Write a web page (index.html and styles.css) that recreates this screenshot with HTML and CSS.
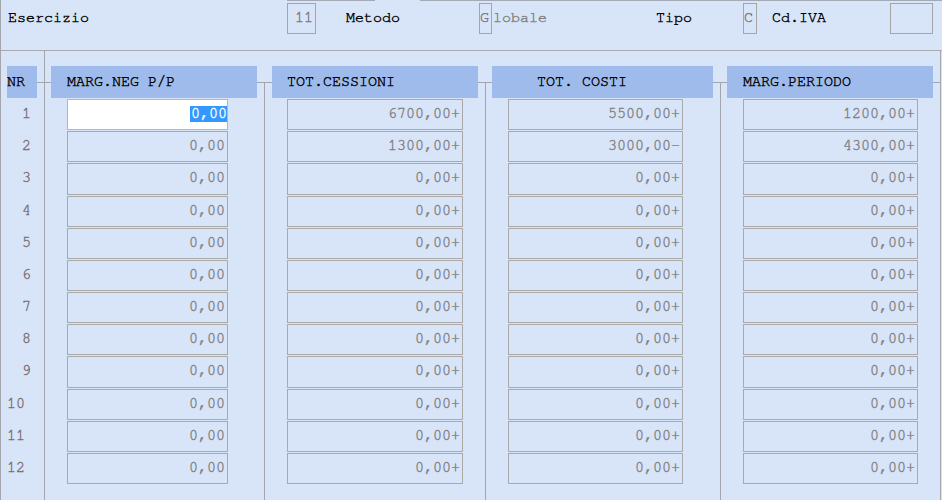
FILE: index.html
```html
<!DOCTYPE html>
<html lang="it">
<head>
<meta charset="utf-8">
<title>Margini</title>
<link rel="stylesheet" href="styles.css">
</head>
<body>
<div class="page">
  <div class="strip"><span class="g1"></span><span class="l1"></span><span class="g2"></span><span class="l2"></span></div>
  <div class="topbar">
    <span class="lbl w-eser">Esercizio</span>
    <span class="box b11">11</span>
    <span class="lbl w-met">Metodo</span>
    <span class="box bg">G</span>
    <span class="lbl dim w-glob">lobale</span>
    <span class="lbl w-tipo">Tipo</span>
    <span class="box bc">C</span>
    <span class="lbl w-iva">Cd.IVA</span>
    <span class="box biva"></span>
  </div>
  <div class="lower">
    <div class="col nr">
      <div class="hd">NR</div>
      <div class="rows">
        <div class="n">1</div><div class="n">2</div><div class="n">3</div><div class="n">4</div>
        <div class="n">5</div><div class="n">6</div><div class="n">7</div><div class="n">8</div>
        <div class="n">9</div><div class="n d2">10</div><div class="n d2">11</div><div class="n d2">12</div>
      </div>
    </div>
    <div class="col c1">
      <div class="hd">MARG.NEG P/P</div>
      <div class="rows">
        <div class="cell sel"><span>0,00</span></div>
        <div class="cell">0,00</div><div class="cell">0,00</div><div class="cell">0,00</div>
        <div class="cell">0,00</div><div class="cell">0,00</div><div class="cell">0,00</div>
        <div class="cell">0,00</div><div class="cell">0,00</div><div class="cell">0,00</div>
        <div class="cell">0,00</div><div class="cell">0,00</div>
      </div>
    </div>
    <div class="col c2">
      <div class="hd">TOT.CESSIONI</div>
      <div class="rows">
        <div class="cell">6700,00+</div><div class="cell">1300,00+</div>
        <div class="cell">0,00+</div><div class="cell">0,00+</div><div class="cell">0,00+</div>
        <div class="cell">0,00+</div><div class="cell">0,00+</div><div class="cell">0,00+</div>
        <div class="cell">0,00+</div><div class="cell">0,00+</div><div class="cell">0,00+</div>
        <div class="cell">0,00+</div>
      </div>
    </div>
    <div class="col c3">
      <div class="hd">TOT. COSTI</div>
      <div class="rows">
        <div class="cell">5500,00+</div><div class="cell">3000,00-</div>
        <div class="cell">0,00+</div><div class="cell">0,00+</div><div class="cell">0,00+</div>
        <div class="cell">0,00+</div><div class="cell">0,00+</div><div class="cell">0,00+</div>
        <div class="cell">0,00+</div><div class="cell">0,00+</div><div class="cell">0,00+</div>
        <div class="cell">0,00+</div>
      </div>
    </div>
    <div class="col c4">
      <div class="hd">MARG.PERIODO</div>
      <div class="rows">
        <div class="cell">1200,00+</div><div class="cell">4300,00+</div>
        <div class="cell">0,00+</div><div class="cell">0,00+</div><div class="cell">0,00+</div>
        <div class="cell">0,00+</div><div class="cell">0,00+</div><div class="cell">0,00+</div>
        <div class="cell">0,00+</div><div class="cell">0,00+</div><div class="cell">0,00+</div>
        <div class="cell">0,00+</div>
      </div>
    </div>
  </div>
</div>
</body>
</html>
```
FILE: styles.css
```css
* { box-sizing: border-box; margin: 0; padding: 0; }
html, body { width: 942px; height: 500px; overflow: hidden; }
body {
  background: #d8e4f8;
  font-family: "Nimbus Mono PS", "Nimbus Mono L", "FreeMono", "Liberation Mono", "Courier New", monospace;
  font-size: 15px;
  color: #000;
  -webkit-text-stroke: 0.4px currentColor;
}
.page {
  height: 500px;
  border-left: 1px solid #a3a7ad;
  display: flex;
  flex-direction: column;
}
.strip { display: flex; height: 1px; flex: none; }
.strip .g1 { width: 286px; }
.strip .l1 { width: 88px; background: #a3a9b5; }
.strip .g2 { width: 45px; }
.strip .l2 { flex: 1; background: #a3a9b5; }

.topbar {
  flex: none;
  display: flex;
  align-items: flex-start;
  height: 50px;
  padding: 2px 0 0 7px;
  border-bottom: 1px solid #a8aaae;
}
.lbl { height: 31px; line-height: 30px; white-space: pre; flex: none; }
.dim { color: #808080; }
.box {
  flex: none;
  height: 31px;
  border: 1px solid #a6a6a6;
  line-height: 28px;
  color: #7a7a7a;
  overflow: hidden;
  white-space: pre;
}
.w-eser { width: 279px; }
.b11 { width: 29px; text-align: right; padding-right: 2px; }
.w-met { width: 133px; margin-left: 30px; }
.bg { width: 13px; }
.w-glob { width: 163px; margin-left: 1px; }
.w-tipo { width: 87px; }
.bc { width: 14px; }
.w-iva { width: 118px; margin-left: 15px; }
.biva { width: 43px; }

.lower { flex: 1; display: flex; }
.col { display: flex; flex-direction: column; flex: none; }
.nr {
  width: 43px;
  background: linear-gradient(#a3a7ad, #a3a7ad) 36px 31px / 100% 1px no-repeat;
}
.c1 {
  width: 220px;
  background:
    linear-gradient(#a3a7ad, #a3a7ad) 0 0 / 1px 100% no-repeat,
    linear-gradient(#a3a7ad, #a3a7ad) 0 31px / 100% 1px no-repeat;
}
.c2 { width: 221px; }
.c3 { width: 235px; }
.c2, .c3 {
  background:
    linear-gradient(#a3a7ad, #a3a7ad) 0 31px / 1px 100% no-repeat,
    linear-gradient(#a3a7ad, #a3a7ad) 0 31px / 100% 1px no-repeat;
}
.c4 {
  width: 221px;
  background:
    linear-gradient(#a3a7ad, #a3a7ad) 0 31px / 1px 100% no-repeat,
    linear-gradient(#a3a7ad, #a3a7ad) 0 31px / 100% 1px no-repeat,
    linear-gradient(#a3a7ad, #a3a7ad) right 0 top 0 / 1px 100% no-repeat;
}

.hd {
  flex: none;
  height: 32px;
  line-height: 31px;
  margin-top: 15px;
  background: #9ebbeb;
  white-space: pre;
}
.nr .hd { width: 30px; margin-left: 6px; }
.c1 .hd { width: 206px; margin-left: 7px; padding-left: 16px; }
.c2 .hd { width: 206px; margin-left: 8px; padding-left: 15px; }
.c3 .hd { width: 221px; margin-left: 7px; padding-left: 45px; }
.c4 .hd { width: 206px; margin-left: 7px; padding-left: 16px; }

.rows { display: flex; flex-direction: column; }
.n {
  height: 31.18px;
  margin-top: 1px;
  line-height: 30px;
  color: #7a7070;
  padding-left: 21px;
}
.n.d2 { padding-left: 6px; }

.cell {
  height: 31.18px;
  margin-top: 1px;
  margin-left: 23px;
  border: 1px solid #a9a9a9;
  text-align: right;
  padding-right: 2px;
  line-height: 28px;
  color: #808080;
  white-space: pre;
}
.c1 .cell { width: 161px; }
.c2 .cell { width: 176px; }
.c3 .cell { width: 175px; }
.c4 .cell { width: 175px; }

.cell.sel {
  background: #fff;
  border-color: #e1b15c;
  padding-right: 0;
}
.cell.sel span {
  display: inline-block;
  background: #3399ff;
  color: #fff;
  line-height: 16px;
  padding-left: 1px;
}
```
